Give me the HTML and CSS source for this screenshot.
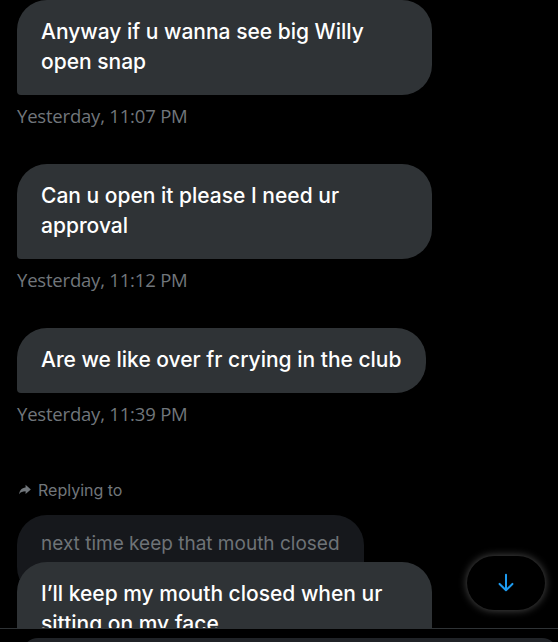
FILE: index.html
```html
<!DOCTYPE html>
<html lang="en">
<head>
  <meta charset="UTF-8">
  <meta name="viewport" content="width=device-width, initial-scale=1.0">
  <title>Messages</title>
  <link rel="stylesheet" href="styles.css">
</head>
<body>
  <div class="chat">
    <div class="messages">
      <div class="msg">
        <div class="bubble">Anyway if u wanna see big Willy open snap</div>
        <div class="time">Yesterday, 11:07 PM</div>
      </div>
      <div class="msg">
        <div class="bubble">Can u open it please I need ur approval</div>
        <div class="time">Yesterday, 11:12 PM</div>
      </div>
      <div class="msg">
        <div class="bubble">Are we like over fr crying in the club</div>
        <div class="time">Yesterday, 11:39 PM</div>
      </div>
      <div class="msg reply">
        <div class="reply-label">
          <svg viewBox="0 0 24 24" width="14" height="14"><path d="M13 3l9 8-9 8v-5c-5.2 0-8.6 1.4-11 5.1 0.8-6.2 4.3-10.6 11-11.2z" fill="#71767b"/></svg>
          Replying to
        </div>
        <div class="bubble quoted">next time keep that mouth closed</div>
        <div class="bubble overlap">I’ll keep my mouth closed when ur sitting on my face</div>
      </div>
    </div>

    <button class="scroll-down" aria-label="Scroll to bottom">
      <svg viewBox="0 0 24 24" width="22" height="22"><path d="M12 3v17M5 13l7 7 7-7" fill="none" stroke="#1d9bf0" stroke-width="2.2" stroke-linecap="round" stroke-linejoin="round"/></svg>
    </button>

    <footer class="composer">
      <div class="input"></div>
    </footer>
  </div>
</body>
</html>
```

FILE: styles.css
```css
body {
  margin: 0;
  background: #000;
  font-family: 'Inter', 'Open Sans', sans-serif;
  color: #e7e9ea;
  overflow: hidden;
}

.chat {
  position: relative;
  height: 642px;
  overflow: hidden;
  display: flex;
  flex-direction: column;
}

.messages {
  flex-shrink: 0;
  height: 628px;
  overflow: hidden;
  padding-left: 17px;
  display: flex;
  flex-direction: column;
}

.msg {
  flex-shrink: 0;
  display: flex;
  flex-direction: column;
  align-items: flex-start;
  margin-bottom: 37px;
}

.bubble {
  box-sizing: border-box;
  max-width: 415px;
  padding: 17px 24px 18px;
  background: #2f3336;
  border-radius: 30px 30px 30px 4px;
  font-size: 21px;
  font-weight: 500;
  line-height: 30px;
  color: #fff;
}

.msg:first-child .bubble {
  width: 415px;
}

.msg:nth-child(2) .bubble {
  width: 415px;
}

.time {
  margin-top: 10px;
  font-family: 'Open Sans', Arial, sans-serif;
  font-size: 18.5px;
  line-height: 22px;
  letter-spacing: -0.2px;
  color: #71767b;
}

.reply {
  margin-top: 18px;
}

.reply-label {
  display: flex;
  align-items: center;
  gap: 6px;
  margin-left: 1px;
  font-size: 16px;
  line-height: 20px;
  color: #71767b;
  margin-bottom: 15px;
}

.bubble.quoted {
  background: #16181c;
  color: #6e7377;
  font-size: 19px;
  font-weight: 400;
  padding: 14px 24px 38px;
  border-radius: 30px;
}

.bubble.overlap {
  width: 415px;
  margin-top: -35px;
}

.scroll-down {
  position: absolute;
  left: 467px;
  top: 556px;
  width: 78px;
  height: 54px;
  border-radius: 27px;
  border: none;
  background: #000;
  box-shadow: 0 0 8px rgba(255, 255, 255, 0.32);
  display: flex;
  align-items: center;
  justify-content: center;
  cursor: pointer;
}

.composer {
  flex-shrink: 0;
  height: 13px;
  border-top: 1px solid #2f3336;
  padding: 9px 0 0 22px;
  box-sizing: content-box;
}

.composer .input {
  height: 40px;
  background: #202327;
  border-radius: 16px;
}
```
